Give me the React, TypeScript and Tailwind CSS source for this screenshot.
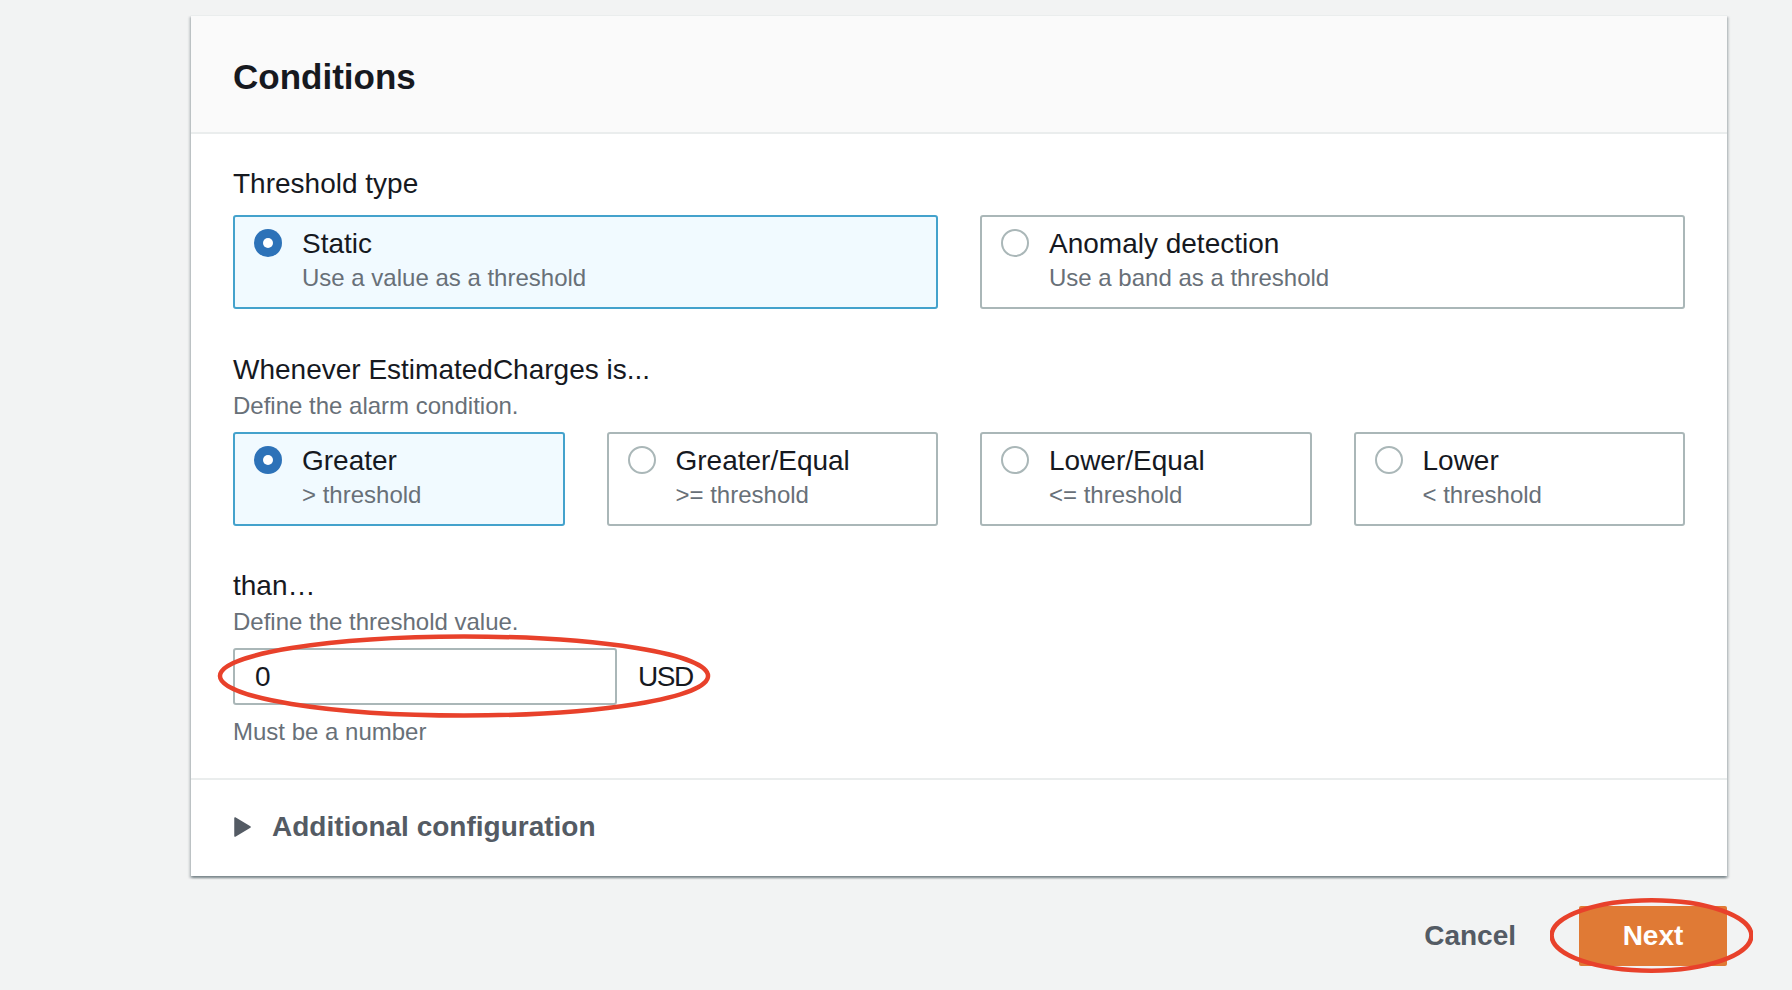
import React from "react";

const FONT = { fontFamily: '"Liberation Sans", Arial, sans-serif' };

function Radio({ checked }: { checked: boolean }) {
  return checked ? (
    <div className="mt-[3px] flex h-[28px] w-[28px] shrink-0 items-center justify-center rounded-full bg-[#2d72b8]">
      <div className="h-[10px] w-[10px] rounded-full bg-white" />
    </div>
  ) : (
    <div className="mt-[3px] h-[28px] w-[28px] shrink-0 rounded-full border-2 border-[#aab7b8] bg-white" />
  );
}

function Tile({
  title,
  desc,
  checked,
}: {
  title: string;
  desc: string;
  checked: boolean;
}) {
  return (
    <div
      className={
        checked
          ? "flex h-[94px] gap-[20px] rounded-[3px] border-2 border-[#44a2cc] bg-[#f1faff] pl-[19px] pt-[9px]"
          : "flex h-[94px] gap-[20px] rounded-[3px] border-2 border-[#aab7b8] bg-white pl-[19px] pt-[9px]"
      }
    >
      <Radio checked={checked} />
      <div className="flex flex-col">
        <div className="text-[28px] leading-[36px] text-[#16191f]">{title}</div>
        <div className="text-[24px] leading-[32px] text-[#687078]">{desc}</div>
      </div>
    </div>
  );
}

function Ellipse({ className }: { className: string }) {
  return (
    <svg
      className={className}
      viewBox="0 0 100 100"
      preserveAspectRatio="none"
      fill="none"
    >
      <ellipse
        cx="50"
        cy="50"
        rx="49.2"
        ry="47"
        stroke="#e8412b"
        strokeWidth="4.5"
        vectorEffect="non-scaling-stroke"
      />
    </svg>
  );
}

export default function App() {
  return (
    <div
      className="min-h-[990px] w-full bg-[#f2f3f3] pb-[24px] pt-[15px]"
      style={FONT}
    >
      <div className="ml-[191px] w-[1536px]">
        {/* Panel */}
        <div className="border-t border-[#eaeded] bg-white shadow-[0_2px_2px_0_rgba(0,28,36,0.3),2px_2px_2px_0_rgba(0,28,36,0.15),-2px_2px_2px_0_rgba(0,28,36,0.15)]">
          <div className="flex h-[118px] items-center border-b-2 border-[#eaeded] bg-[#fafafa] px-[42px] pt-[6px]">
            <h2 className="text-[35px] font-bold leading-[44px] text-[#16191f]">
              Conditions
            </h2>
          </div>

          <div className="px-[42px] pb-[30px] pt-[30px]">
            <div className="text-[28px] leading-[40px] text-[#16191f]">
              Threshold type
            </div>
            <div className="mt-[11px] grid grid-cols-2 gap-[42px]">
              <Tile title="Static" desc="Use a value as a threshold" checked />
              <Tile
                title="Anomaly detection"
                desc="Use a band as a threshold"
                checked={false}
              />
            </div>

            <div className="mt-[41px] text-[28px] leading-[40px] text-[#16191f]">
              Whenever EstimatedCharges is...
            </div>
            <div className="text-[24px] leading-[32px] text-[#687078]">
              Define the alarm condition.
            </div>
            <div className="mt-[10px] grid grid-cols-4 gap-[42px]">
              <Tile title="Greater" desc="> threshold" checked />
              <Tile title="Greater/Equal" desc=">= threshold" checked={false} />
              <Tile title="Lower/Equal" desc="<= threshold" checked={false} />
              <Tile title="Lower" desc="< threshold" checked={false} />
            </div>

            <div className="mt-[40px] text-[28px] leading-[40px] text-[#16191f]">
              than…
            </div>
            <div className="text-[24px] leading-[32px] text-[#687078]">
              Define the threshold value.
            </div>
            <div className="relative mt-[10px] flex w-fit items-center">
              <input
                readOnly
                value="0"
                className="h-[57px] w-[384px] rounded-[3px] border-2 border-[#aab7b8] bg-white pl-[20px] text-[28px] text-[#16191f] outline-none"
                style={FONT}
              />
              <span className="ml-[21px] text-[28px] leading-[40px] tracking-[-1.5px] text-[#16191f]">
                USD
              </span>
              <Ellipse className="pointer-events-none absolute left-[-17px] top-[-14px] h-[84px] w-[496px]" />
            </div>
            <div className="mt-[11px] text-[24px] leading-[32px] text-[#687078]">
              Must be a number
            </div>
          </div>

          <div className="flex h-[98px] items-center gap-[21px] border-t-2 border-[#eaeded] px-[42px] pb-[3px]">
            <svg width="17" height="20" viewBox="0 0 17 20" className="ml-[1px]">
              <polygon points="1,1 16,10 1,19" fill="#545b64" stroke="#545b64" strokeWidth="1.5" strokeLinejoin="round" />
            </svg>
            <span className="text-[28px] font-bold leading-[40px] text-[#545b64]">
              Additional configuration
            </span>
          </div>
        </div>

        {/* Actions */}
        <div className="mt-[30px] flex items-center justify-end gap-[43px]">
          <button
            className="h-[60px] px-[20px] text-[28px] font-bold text-[#545b64]"
            style={FONT}
          >
            Cancel
          </button>
          <div className="relative">
            <button
              className="h-[60px] w-[148px] rounded-[2px] bg-[#e07a35] text-[28px] font-bold text-white"
              style={FONT}
            >
              Next
            </button>
            <Ellipse className="pointer-events-none absolute left-[-29px] top-[-8px] h-[75px] w-[203px]" />
          </div>
        </div>
      </div>
    </div>
  );
}
